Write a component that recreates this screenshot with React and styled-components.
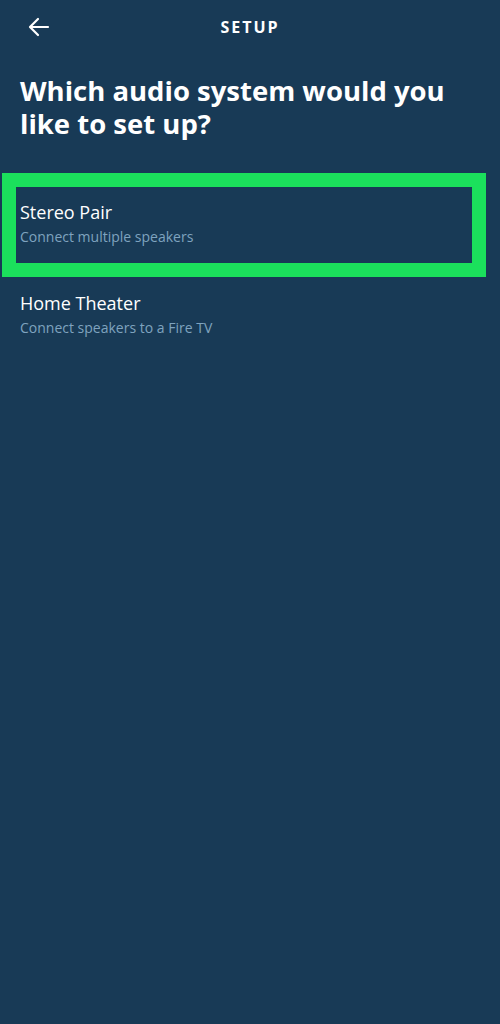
import React from 'react';
import styled, { createGlobalStyle } from 'styled-components';

const GlobalStyle = createGlobalStyle`
  html, body {
    margin: 0;
    padding: 0;
    background: #183a56;
  }
  body {
    font-family: "Open Sans", "Noto Sans", sans-serif;
  }
`;

const Screen = styled.div`
  width: 500px;
  min-height: 1024px;
  background: #183a56;
  color: #ffffff;
  display: flex;
  flex-direction: column;
`;

const TopBar = styled.div`
  height: 54px;
  display: grid;
  grid-template-columns: 60px 1fr 60px;
  align-items: center;
`;

const BackButton = styled.button`
  background: none;
  border: 0;
  padding: 0 0 0 28px;
  height: 54px;
  display: flex;
  align-items: center;
  color: #ffffff;
  cursor: pointer;
`;

const BarTitle = styled.div`
  text-align: center;
  font-size: 16px;
  font-weight: 700;
  letter-spacing: 2px;
`;

const Heading = styled.h1`
  margin: 20px 0 0;
  padding: 0 20px;
  font-size: 27.5px;
  line-height: 33px;
  font-weight: 700;
`;

const OptionList = styled.div`
  display: flex;
  flex-direction: column;
  margin-top: 33px;
  padding: 0 14px 0 2px;
`;

const Option = styled.div`
  border: ${p => (p.$selected ? '14px solid #1be05c' : '0')};
  padding: ${p => (p.$selected ? '13px 4px 17px' : '14px 4px 17px 18px')};
  display: flex;
  flex-direction: column;
  gap: 3px;
`;

const OptionTitle = styled.div`
  font-size: 18px;
  line-height: 24px;
`;

const OptionText = styled.div`
  font-size: 14px;
  line-height: 19px;
  color: #7fa3bf;
`;

const options = [
  { title: 'Stereo Pair', text: 'Connect multiple speakers', selected: true },
  { title: 'Home Theater', text: 'Connect speakers to a Fire TV' },
];

export default function App() {
  return (
    <>
      <GlobalStyle />
      <Screen>
        <TopBar>
          <BackButton aria-label="Back">
            <svg width="22" height="20" viewBox="0 0 22 20" fill="none" stroke="#fff" strokeWidth="2.2" strokeLinecap="round" strokeLinejoin="round">
              <path d="M20 10H2.5M10 2L2 10l8 8" />
            </svg>
          </BackButton>
          <BarTitle>SETUP</BarTitle>
          <div />
        </TopBar>
        <Heading>Which audio system would you like to set up?</Heading>
        <OptionList>
          {options.map(o => (
            <Option key={o.title} $selected={o.selected}>
              <OptionTitle>{o.title}</OptionTitle>
              <OptionText>{o.text}</OptionText>
            </Option>
          ))}
        </OptionList>
      </Screen>
    </>
  );
}
